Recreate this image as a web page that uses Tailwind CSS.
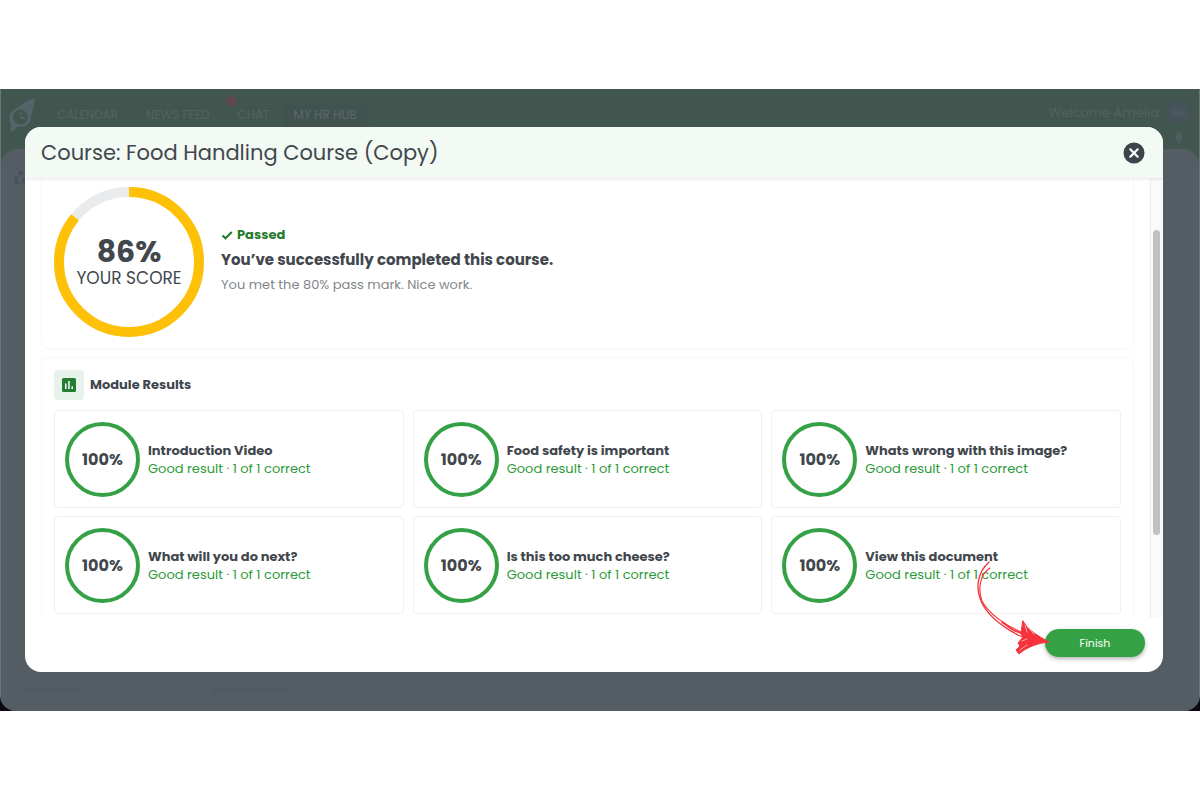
<!DOCTYPE html>
<html lang="en">
<head>
    <meta charset="UTF-8">
    <meta name="viewport" content="width=device-width, initial-scale=1.0">
    <title>Course: Food Handling Course (Copy)</title>
    <script src="https://cdn.jsdelivr.net/npm/@tailwindcss/browser@4"></script>
</head>
<body class="flex min-h-screen flex-col justify-center bg-white font-[Poppins,Inter,sans-serif] text-[#41474d]">
    <div class="bg-[#0b0a10]">
        <div class="grid overflow-hidden rounded-b-2xl border-x border-[#6b757a] bg-[#425650]">

            <!-- Dimmed app behind the dialog -->
            <div class="col-start-1 row-start-1 flex flex-col" aria-hidden="true">
                <nav class="flex h-[60px] items-start justify-between pt-2 pr-2 pl-[6px] text-xs text-[#53635f]">
                    <div class="flex items-center gap-7">
                        <svg class="-mr-2 h-9 w-[30px]" viewBox="0 0 30 36" fill="none">
                            <path d="M28 1 C19 4 15 7 12 10 C4 12 0 20 4 28 L3 33 L5 35 L10 30 C20 31 25 25 24 18 C26 13 27 8 28 1 Z" fill="#53656a"/>
                            <circle cx="13.5" cy="20" r="7.5" fill="#425650"/>
                            <path d="M14 15 V21 H18" stroke="#53656a" stroke-width="1.5"/>
                        </svg>
                        <span>CALENDAR</span>
                        <span>NEWS FEED</span>
                        <span class="relative">CHAT
                            <span class="absolute -top-3 -left-3 size-3 rounded-full bg-[#574c50] text-center text-[9px] leading-3 text-[#9b3545]">!</span>
                        </span>
                        <span class="-ml-4 rounded bg-[#41534f] px-3 py-1 text-[#5b6967]">MY HR HUB</span>
                    </div>
                    <div class="flex flex-col items-end gap-1">
                        <div class="flex items-center gap-2 pt-1 text-[13px]">
                            <span>Welcome Amelia</span>
                            <span class="size-6 rounded-full bg-[#47535a] text-center text-[9px] leading-6">AH</span>
                        </div>
                        <svg class="mr-2 h-4 w-2" viewBox="0 0 8 16"><path d="M4 1 L8 7 L4 15 L0 7 Z" fill="#4c5e60"/></svg>
                    </div>
                </nav>
                <div class="flex flex-1 flex-col justify-between rounded-t-2xl bg-[#545c64] px-3 pt-5 pb-[18px]">
                    <svg class="h-4 w-5" viewBox="0 0 20 16" fill="#49525a">
                        <circle cx="8" cy="4" r="2.5"/><circle cx="15" cy="3" r="2"/><circle cx="3" cy="9" r="2"/>
                        <path d="M1 15 C1 10 6 10 7 15 Z M8 14 C8 7 17 7 18 14 Z"/>
                    </svg>
                    <div class="flex gap-[131px] pl-3">
                        <span class="h-[5px] w-[57px] rounded bg-[#525a61]"></span>
                        <span class="h-[5px] w-[77px] rounded bg-[#525a61]"></span>
                    </div>
                </div>
            </div>

            <!-- Course result dialog -->
            <section class="z-10 col-start-1 row-start-1 mt-[38px] mr-9 mb-[39px] ml-6 overflow-hidden rounded-2xl bg-white" role="dialog" aria-labelledby="title">
                <header class="relative flex h-[51px] items-center justify-between bg-[#f3faf3] pr-[18px] pl-4 shadow-[0_1px_3px_rgba(0,0,0,0.1)]">
                    <h1 id="title" class="text-[21px]">Course: Food Handling Course (Copy)</h1>
                    <button type="button" aria-label="Close">
                        <svg class="size-[22px]" viewBox="0 0 22 22" fill="none">
                            <circle cx="11" cy="11" r="10.5" fill="#3d444b"/>
                            <path d="M7.3 7.3 L14.7 14.7 M14.7 7.3 L7.3 14.7" stroke="#fff" stroke-width="2.2" stroke-linecap="round"/>
                        </svg>
                    </button>
                </header>

                <div class="flex">
                    <div class="min-w-0 flex-1 px-4">
                        <div class="mb-2 flex items-center gap-[17px] rounded-b-lg border-x border-b border-[#f8f8f8] px-3 pt-[9px] pb-[11px] shadow-[0_1px_3px_rgba(0,0,0,0.02)]">
                            <div class="grid size-[150px] shrink-0 place-items-center">
                                <svg class="col-start-1 row-start-1 size-[150px] -rotate-90" viewBox="0 0 150 150" fill="none">
                                    <circle cx="75" cy="75" r="70" stroke="#e9ebed" stroke-width="10"/>
                                    <circle cx="75" cy="75" r="70" stroke="#ffc107" stroke-width="10" pathLength="100" stroke-dasharray="86 100"/>
                                </svg>
                                <div class="col-start-1 row-start-1 text-center">
                                    <div class="text-3xl leading-8 font-bold">86%</div>
                                    <div class="text-[17px] leading-5">YOUR SCORE</div>
                                </div>
                            </div>
                            <div class="pb-1">
                                <p class="flex items-center gap-1 text-[13px] leading-5 font-bold text-[#1f7a2c]">
                                    <svg class="size-3" viewBox="0 0 12 12" fill="none" stroke="currentColor" stroke-width="2"><path d="M1.5 6.5 L4.5 9.3 L10.8 3"/></svg>
                                    Passed
                                </p>
                                <h2 class="mt-[3px] text-[15px] leading-6 font-bold">You’ve successfully completed this course.</h2>
                                <p class="mt-[3px] text-[13px] leading-5 text-[#838688]">You met the 80% pass mark. Nice work.</p>
                            </div>
                        </div>

                        <div class="rounded-t-lg border-x border-t border-[#f8f8f8] px-3 pt-3 pb-1">
                            <div class="mb-[10px] flex items-center gap-[6px]">
                                <span class="grid size-[30px] place-items-center rounded bg-[#e7f3ea]">
                                    <svg class="size-[14px]" viewBox="0 0 14 14">
                                        <rect width="14" height="14" rx="1.5" fill="#237d32"/>
                                        <path d="M3 5.5h1.5V11H3z M6.2 3h1.5v8H6.2z M9.5 8.3H11V11H9.5z" fill="#fff"/>
                                    </svg>
                                </span>
                                <h3 class="text-[13px] font-bold">Module Results</h3>
                            </div>
                            <div id="modules" class="grid grid-cols-3 gap-x-[9px] gap-y-2"></div>
                        </div>
                    </div>

                    <div class="w-[13px] shrink-0 border-l border-[#ececec] bg-[#fafafa] px-[2px] pt-[52px]">
                        <div class="h-[305px] w-[7px] rounded-full bg-[#c1c1c1]"></div>
                    </div>
                </div>

                <footer class="flex h-[54px] items-start justify-end pt-[11px] pr-[18px]">
                    <div class="relative">
                        <button type="button" class="h-7 w-[100px] rounded-full bg-[#33a144] text-[11px] text-white shadow-[0_2px_4px_rgba(0,0,0,0.3)]">Finish</button>
                        <svg class="pointer-events-none absolute -top-[74px] -left-[75px] h-[105px] w-[90px]" viewBox="0 0 90 105" fill="none" stroke="#f5333a" stroke-linecap="round" stroke-linejoin="round">
                            <path d="M19 7 C8 17 5 32 11 46 C17 60 31 71 48 80 L55 83" stroke-width="1.3"/>
                            <path d="M20 13 C9 20 8 36 12 46 C18 58 35 71 58 80" stroke-width="1.2"/>
                            <path d="M32 67 L43 75 L60 82" stroke-width="1.6"/>
                            <path d="M53 66 C58 75 68 81 79 87 C68 88 57 92 49 99 L46 95 L50 91 L48 88 L53 82 L51 79 Z" fill="#f5333a" stroke-width="1"/>
                            <path d="M55 70 L57 77 M57 71 L64 79 M50 95 L57 90 M52 86 L57 84" stroke="#fff" stroke-width="0.6"/>
                        </svg>
                    </div>
                </footer>
            </section>
        </div>
    </div>

    <script>
        const modules = [
            'Introduction Video',
            'Food safety is important',
            'Whats wrong with this image?',
            'What will you do next?',
            'Is this too much cheese?',
            'View this document'
        ];

        document.getElementById('modules').innerHTML = modules.map(name => `
            <article class="flex items-center gap-2 rounded border border-[#f0f0f0] px-[10px] pt-[11px] pb-[10px]">
                <div class="grid size-[75px] shrink-0 place-items-center rounded-full border-4 border-[#35a146] text-base font-bold">100%</div>
                <div class="min-w-0">
                    <h4 class="text-[13px] leading-[18px] font-bold">${name}</h4>
                    <p class="text-[13px] leading-[18px] text-[#2c9a39]">Good result · 1 of 1 correct</p>
                </div>
            </article>
        `).join('');
    </script>
</body>
</html>
